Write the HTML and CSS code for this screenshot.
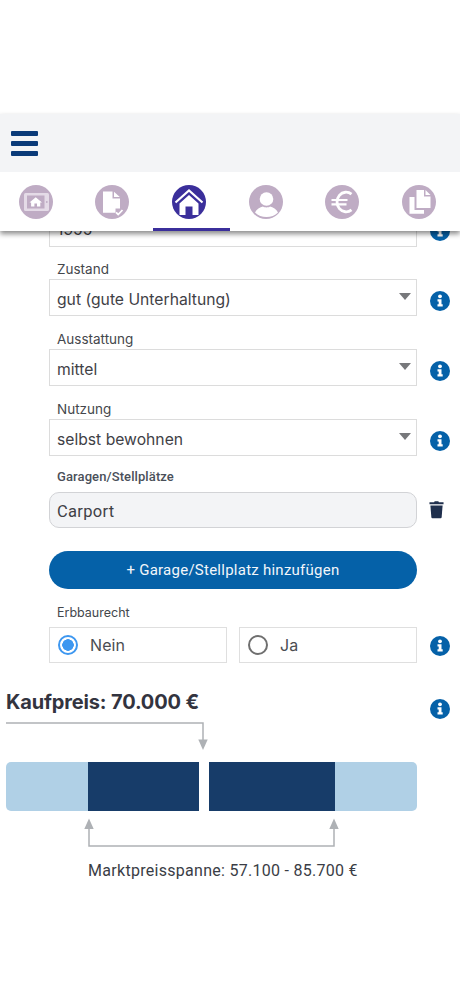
FILE: index.html
```html
<!DOCTYPE html>
<html lang="de">
<head>
<meta charset="utf-8">
<title>Kaufpreis</title>
<link rel="stylesheet" href="styles.css">
</head>
<body>
<header class="header">
  <div class="topbar">
    <div class="burger"><span></span><span></span><span></span></div>
  </div>
  <nav class="tabs">
    <div class="tab">
      <svg class="tab-icon" viewBox="0 0 34 34"><circle cx="17" cy="17" r="17" fill="#bfacc4"/><rect x="5" y="8" width="25" height="18" rx="1.500" fill="#e4dbe7"/><rect x="8" y="10.500" width="17.500" height="13" fill="#bfacc4"/><circle cx="27.800" cy="17" r="0.900" fill="#bfacc4"/><path d="M10.500 17.500 16.700 12.300 23 17.500 21.300 17.500 21.300 21.500 18 21.500 18 18.500 15.400 18.500 15.400 21.500 12.100 21.500 12.100 17.500Z" fill="#fff"/></svg>
    </div>
    <div class="tab">
      <svg class="tab-icon" viewBox="0 0 34 34"><circle cx="17" cy="17" r="17" fill="#bfacc4"/><path d="M8 6.500H17.500V13.500H25V23.500H20.500V27.800H8Z" fill="#fff"/><path d="M19 6.800 24.800 12H19Z" fill="#fff"/><path d="M21 27.300 23.200 29.500 27.500 25" fill="none" stroke="#fff" stroke-width="1.800"/></svg>
    </div>
    <div class="tab tab-active">
      <svg class="tab-icon" viewBox="0 0 34 34"><circle cx="17" cy="17" r="17" fill="#3b2f9b"/><path d="M3.500 17.500 17 5.500 30.500 17.500" fill="none" stroke="#fff" stroke-width="2.200"/><path d="M7.500 18.500 17 10 26.500 18.500V30H20.500V21.500H13.500V30H7.500Z" fill="#fff"/></svg>
    </div>
    <div class="tab">
      <svg class="tab-icon" viewBox="0 0 34 34"><circle cx="17" cy="17" r="17" fill="#bfacc4"/><circle cx="17.500" cy="14" r="6.800" fill="#fff"/><path d="M6 27.500C7.500 24 11 22 14 21.500 15.500 22.700 19.500 22.700 21 21.500 24 22 27.500 24 29 27.500 26 30.500 22 32 17.500 32 13 32 9 30.500 6 27.500Z" fill="#fff"/></svg>
    </div>
    <div class="tab">
      <svg class="tab-icon" viewBox="0 0 34 34"><circle cx="17" cy="17" r="17" fill="#bfacc4"/><path d="M26.500 9.200A9 9.800 0 1 0 26.500 24.800" fill="none" stroke="#fff" stroke-width="2.800"/><path d="M6.500 15H22.500M6.500 19.300H21.500" stroke="#fff" stroke-width="2.200"/></svg>
    </div>
    <div class="tab">
      <svg class="tab-icon" viewBox="0 0 34 34"><circle cx="17" cy="17" r="17" fill="#bfacc4"/><path d="M14.500 5H22V11.500H28.500V23H14.500Z" fill="#fff"/><path d="M23.500 5 28.500 10H23.500Z" fill="#fff"/><path d="M7.500 12H12.500V25H22V28.700H7.500Z" fill="#fff"/></svg>
    </div>
  </nav>
</header>

<main class="form">
  <div class="row row-clipped">
    <div class="control select"><span class="value">1955</span></div>
    <svg class="info" viewBox="0 0 20 20"><use href="#info"/></svg>
  </div>

  <div class="field">
    <label class="label">Zustand</label>
    <div class="row">
      <div class="control select"><span class="value">gut (gute Unterhaltung)</span><i class="caret"></i></div>
      <svg class="info" viewBox="0 0 20 20"><use href="#info"/></svg>
    </div>
  </div>

  <div class="field">
    <label class="label">Ausstattung</label>
    <div class="row">
      <div class="control select"><span class="value">mittel</span><i class="caret"></i></div>
      <svg class="info" viewBox="0 0 20 20"><use href="#info"/></svg>
    </div>
  </div>

  <div class="field">
    <label class="label">Nutzung</label>
    <div class="row">
      <div class="control select"><span class="value">selbst bewohnen</span><i class="caret"></i></div>
      <svg class="info" viewBox="0 0 20 20"><use href="#info"/></svg>
    </div>
  </div>

  <div class="field field-garage">
    <label class="label label-alt">Garagen/Stellplätze</label>
    <div class="row">
      <div class="control readonly"><span class="value value-alt">Carport</span></div>
      <svg class="trash" viewBox="0 0 16 18"><path d="M5.500 1 6 0H10L10.500 1H15.500V3.200H.5V1Z" fill="#1f2f4d"/><path d="M1.500 4.500H14.500L13.500 17C13.400 17.600 13 18 12.400 18H3.600C3 18 2.600 17.600 2.500 17Z" fill="#1f2f4d"/></svg>
    </div>
  </div>

  <button class="add-btn" type="button">+ Garage/Stellplatz hinzufügen</button>

  <div class="field field-erb">
    <label class="label">Erbbaurecht</label>
    <div class="row">
      <div class="radios">
        <div class="radio-box"><i class="radio radio-on"></i><span>Nein</span></div>
        <div class="radio-box"><i class="radio"></i><span>Ja</span></div>
      </div>
      <svg class="info info-flat" viewBox="0 0 20 20"><use href="#info"/></svg>
    </div>
  </div>
</main>

<section class="price">
  <div class="price-head">
    <h2 class="price-title">Kaufpreis: 70.000 €</h2>
    <svg class="info" viewBox="0 0 20 20"><use href="#info"/></svg>
  </div>
  <svg class="arrow-top" viewBox="0 0 460 31"><path d="M6 1H203V19" fill="none" stroke="#aeb1b5" stroke-width="1.500"/><path d="M198.300 17.500H207.700L203 28Z" fill="#aeb1b5"/></svg>
  <div class="bar">
    <div class="bar-light bar-left"></div>
    <div class="bar-dark bar-a"></div>
    <div class="bar-gap"></div>
    <div class="bar-dark bar-b"></div>
    <div class="bar-light bar-right"></div>
  </div>
  <svg class="arrow-bottom" viewBox="0 0 460 38"><path d="M89 16V35H334V16" fill="none" stroke="#aeb1b5" stroke-width="1.500"/><path d="M84.300 18 89 7.500 93.700 18ZM329.300 18 334 7.500 338.700 18Z" fill="#aeb1b5"/></svg>
  <p class="range">Marktpreisspanne: 57.100 - 85.700 €</p>
</section>

<svg class="defs" width="0" height="0">
  <symbol id="info" viewBox="0 0 20 20">
    <circle cx="10" cy="10" r="10" fill="#0561a8"/>
    <circle cx="10" cy="5.300" r="1.900" fill="#fff"/>
    <path d="M7.500 8.300H11.500V13.300H12.700V15.500H7.500V13.300H8.700V10.500H7.500Z" fill="#fff"/>
  </symbol>
</svg>
</body>
</html>
```
FILE: styles.css
```css
* { box-sizing: border-box; }
html, body { margin: 0; padding: 0; background: #fff; }
body {
  height: 996px;
  overflow: hidden;
  padding-top: 114px;
  font-family: Inter, "Liberation Sans", sans-serif;
  color: #3f4146;
}

.header {
  position: relative;
  z-index: 2;
  box-shadow: 0 3px 5px rgba(0, 0, 0, .45);
  background: #fff;
}
.topbar { height: 58px; background: #f3f4f6; padding: 17px 0 0 11px; }
.burger { display: flex; flex-direction: column; gap: 5.500px; width: 27px; }
.burger span { display: block; height: 4.500px; border-radius: 1px; background: #0a3a78; }

.tabs { display: grid; grid-template-columns: repeat(6, 1fr); height: 59px; }
.tab { display: flex; justify-content: center; padding: 13px 5px 0 0; }
.tab-active { border-bottom: 3px solid #3b2f9b; }
.tab-icon { width: 34px; height: 34px; display: block; }

.form { padding: 0 10px 0 49px; margin-top: -21px; }
.row { display: flex; align-items: center; gap: 13px; }
.row-clipped { height: 36px; }
.control {
  position: relative;
  display: flex;
  align-items: center;
  flex: 0 0 368px;
  width: 368px;
  height: 37px;
  padding: 3px 7px 0;
  border: 1.500px solid #dcdcdc;
  background: #fff;
}
.value { font-size: 15.700px; color: #3f4146; }
.value-alt { font-family: Roboto, sans-serif; font-size: 16.500px; letter-spacing: .3px; }
.caret {
  position: absolute;
  right: 5.500px;
  top: 13px;
  width: 0;
  height: 0;
  border-left: 6.500px solid transparent;
  border-right: 6.500px solid transparent;
  border-top: 7px solid #77787b;
}
.info { width: 20px; height: 20px; flex: none; display: block; margin-top: 6px; }
.info-flat { margin-top: 1px; }
.trash { width: 15px; height: 17.500px; margin-left: -1px; flex: none; display: block; }

.field { margin-top: 15px; }
.label {
  display: block;
  padding-left: 8px;
  height: 18px;
  line-height: 16px;
  font-size: 13.500px;
  color: #44474c;
}
.field-garage { margin-top: 11px; }
.label-alt { font-family: Roboto, sans-serif; font-weight: 500; font-size: 13px; height: 25px; line-height: 20px; letter-spacing: .1px; color: #4a4f59; }
.readonly { height: 36px; border-radius: 10px; background: #f3f4f6; border-color: #d2d3d6; }

.add-btn {
  display: block;
  width: 368px;
  height: 38px;
  margin-top: 23px;
  border: 0;
  border-radius: 19px;
  background: #0561a8;
  color: #f2f6fa;
  font-family: Roboto, sans-serif;
  font-weight: 400;
  font-size: 15px;
  letter-spacing: .25px;
}

.field-erb { margin-top: 14px; }
.field-erb .label { height: 24px; line-height: 20px; font-size: 12.500px; }
.radios { display: flex; gap: 12px; flex: 0 0 368px; }
.radio-box {
  display: flex;
  align-items: center;
  flex: 1;
  height: 36px;
  padding-left: 8px;
  border: 1.500px solid #dfdfdf;
  font-size: 16px;
  letter-spacing: .1px;
  color: #4b4d52;
}
.radio {
  width: 20px;
  height: 20px;
  margin-right: 12px;
  border: 2.500px solid #6f6f6f;
  border-radius: 50%;
  background: #fff;
}
.radio-on { border-color: #3d97f0; background: radial-gradient(circle, #3d97f0 0 5.500px, #fff 6px); }

.price { padding: 0 0 0 6px; margin-top: 24px; }
.price-head { display: flex; align-items: center; justify-content: space-between; width: 444px; height: 30px; }
.price-title { margin: 0; font-size: 20px; font-weight: 700; color: #33343f; line-height: 30px; letter-spacing: -.15px; }
.price-head .info { margin-top: 14px; }
.arrow-top { display: block; width: 460px; height: 31px; margin: 5px 0 0 -6px; }
.bar { display: flex; width: 411px; height: 49px; margin-top: 9px; }
.bar-light { background: #b0d0e6; }
.bar-left { width: 82px; border-radius: 5px 0 0 5px; }
.bar-right { width: 82px; border-radius: 0 5px 5px 0; }
.bar-dark { background: #173c69; }
.bar-a { width: 111px; }
.bar-gap { width: 10px; }
.bar-b { width: 126px; }
.arrow-bottom { display: block; width: 460px; height: 38px; margin: 0 0 0 -6px; }
.range {
  margin: 12px 0 0 -6px;
  width: 446px;
  text-align: center;
  font-family: Roboto, sans-serif;
  font-size: 16px;
  letter-spacing: .28px;
  color: #3a3d45;
}
.defs { position: absolute; }
```
